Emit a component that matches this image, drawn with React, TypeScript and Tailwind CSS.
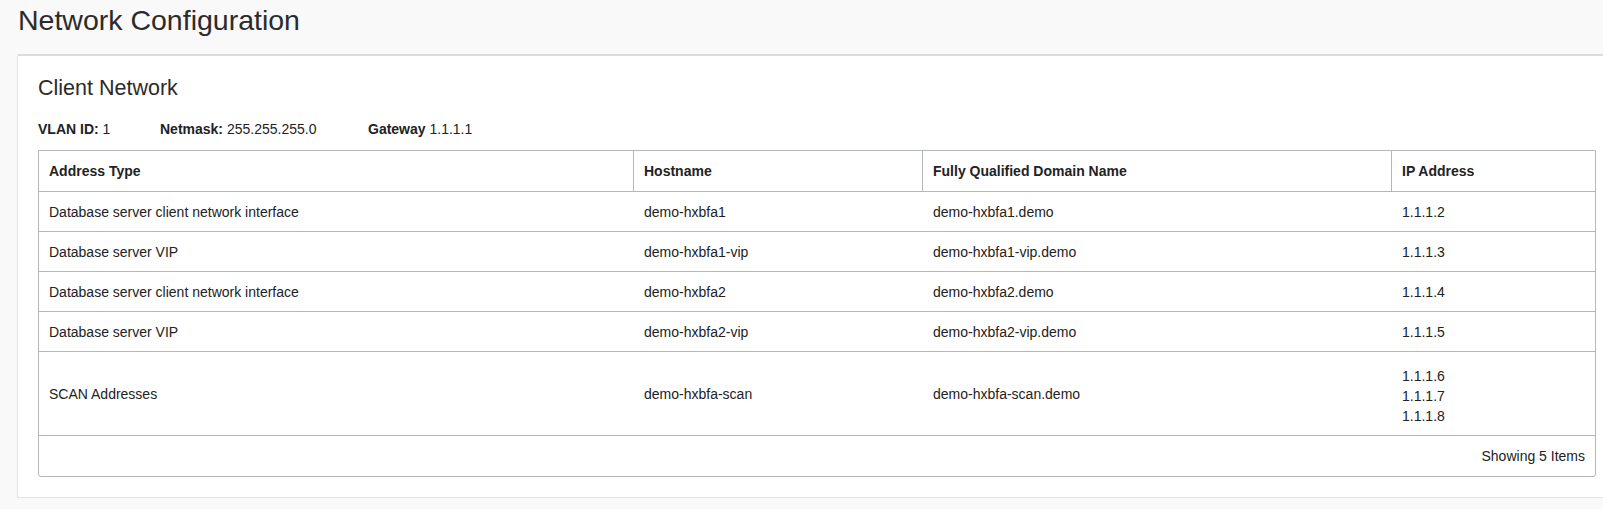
import React from 'react';

type Row = {
  type: string;
  host: string;
  fqdn: string;
  ips: string[];
};

const ROWS: Row[] = [
  { type: 'Database server client network interface', host: 'demo-hxbfa1', fqdn: 'demo-hxbfa1.demo', ips: ['1.1.1.2'] },
  { type: 'Database server VIP', host: 'demo-hxbfa1-vip', fqdn: 'demo-hxbfa1-vip.demo', ips: ['1.1.1.3'] },
  { type: 'Database server client network interface', host: 'demo-hxbfa2', fqdn: 'demo-hxbfa2.demo', ips: ['1.1.1.4'] },
  { type: 'Database server VIP', host: 'demo-hxbfa2-vip', fqdn: 'demo-hxbfa2-vip.demo', ips: ['1.1.1.5'] },
  { type: 'SCAN Addresses', host: 'demo-hxbfa-scan', fqdn: 'demo-hxbfa-scan.demo', ips: ['1.1.1.6', '1.1.1.7', '1.1.1.8'] },
];

// column widths match the header separators
const GRID = 'grid grid-cols-[594px_289px_469px_204px]';

function Meta({ label, value, className }: { label: string; value: string; className?: string }) {
  return (
    <div className={className}>
      <span className="font-bold">{label}</span> {value}
    </div>
  );
}

export default function App() {
  return (
    <div className="w-[1603px] h-[509px] overflow-hidden bg-[#f9f9f9] text-[#222] font-['Liberation_Sans',Arial,sans-serif]">
      {/* Page title */}
      <h1 className="pl-[18px] pt-[3px] h-[54px] text-[28.5px] leading-[34px] text-[#2b2b2b]">
        Network Configuration
      </h1>

      {/* Card */}
      <div className="ml-[17px] w-[1600px] bg-white border border-[#e4e4e6] border-t-2 border-t-[#dcdcdf] rounded-t-[2px] pl-[20px] pr-[20px] pb-[20px]">
        <h2 className="pt-[19px] h-[52px] text-[21.5px] leading-[26px] text-[#2b2b2b]">Client Network</h2>

        <div className="flex items-center h-[42px] text-[14px] leading-[18px]">
          <Meta label="VLAN ID:" value="1" className="w-[122px]" />
          <Meta label="Netmask:" value="255.255.255.0" className="w-[208px]" />
          <Meta label="Gateway" value="1.1.1.1" />
        </div>

        {/* Table */}
        <div className="w-[1558px] border border-[#b3b6bc] rounded-b-[3px] text-[14px] leading-[20px]">
          <div className={`${GRID} h-[41px] border-b border-[#b3b6bc] font-bold`}>
            <div className="flex items-center px-[10px]">Address Type</div>
            <div className="flex items-center px-[10px] border-l border-[#b3b6bc]">Hostname</div>
            <div className="flex items-center px-[10px] border-l border-[#b3b6bc]">Fully Qualified Domain Name</div>
            <div className="flex items-center px-[10px] border-l border-[#b3b6bc]">IP Address</div>
          </div>

          {ROWS.map((r, i) => {
            const multi = r.ips.length > 1;
            return (
              <div key={i} className={`${GRID} border-b border-[#b3b6bc] ${multi ? 'h-[84px]' : 'h-[40px]'}`}>
                <div className="flex items-center px-[10px]">{r.type}</div>
                <div className="flex items-center px-[11px]">{r.host}</div>
                <div className="flex items-center px-[11px]">{r.fqdn}</div>
                <div className={`flex flex-col justify-center px-[11px] ${multi ? 'pt-[4px]' : ''}`}>
                  {r.ips.map((ip) => (
                    <div key={ip}>{ip}</div>
                  ))}
                </div>
              </div>
            );
          })}

          <div className="flex items-center justify-end h-[40px] pr-[10px]">Showing 5 Items</div>
        </div>
      </div>
    </div>
  );
}
